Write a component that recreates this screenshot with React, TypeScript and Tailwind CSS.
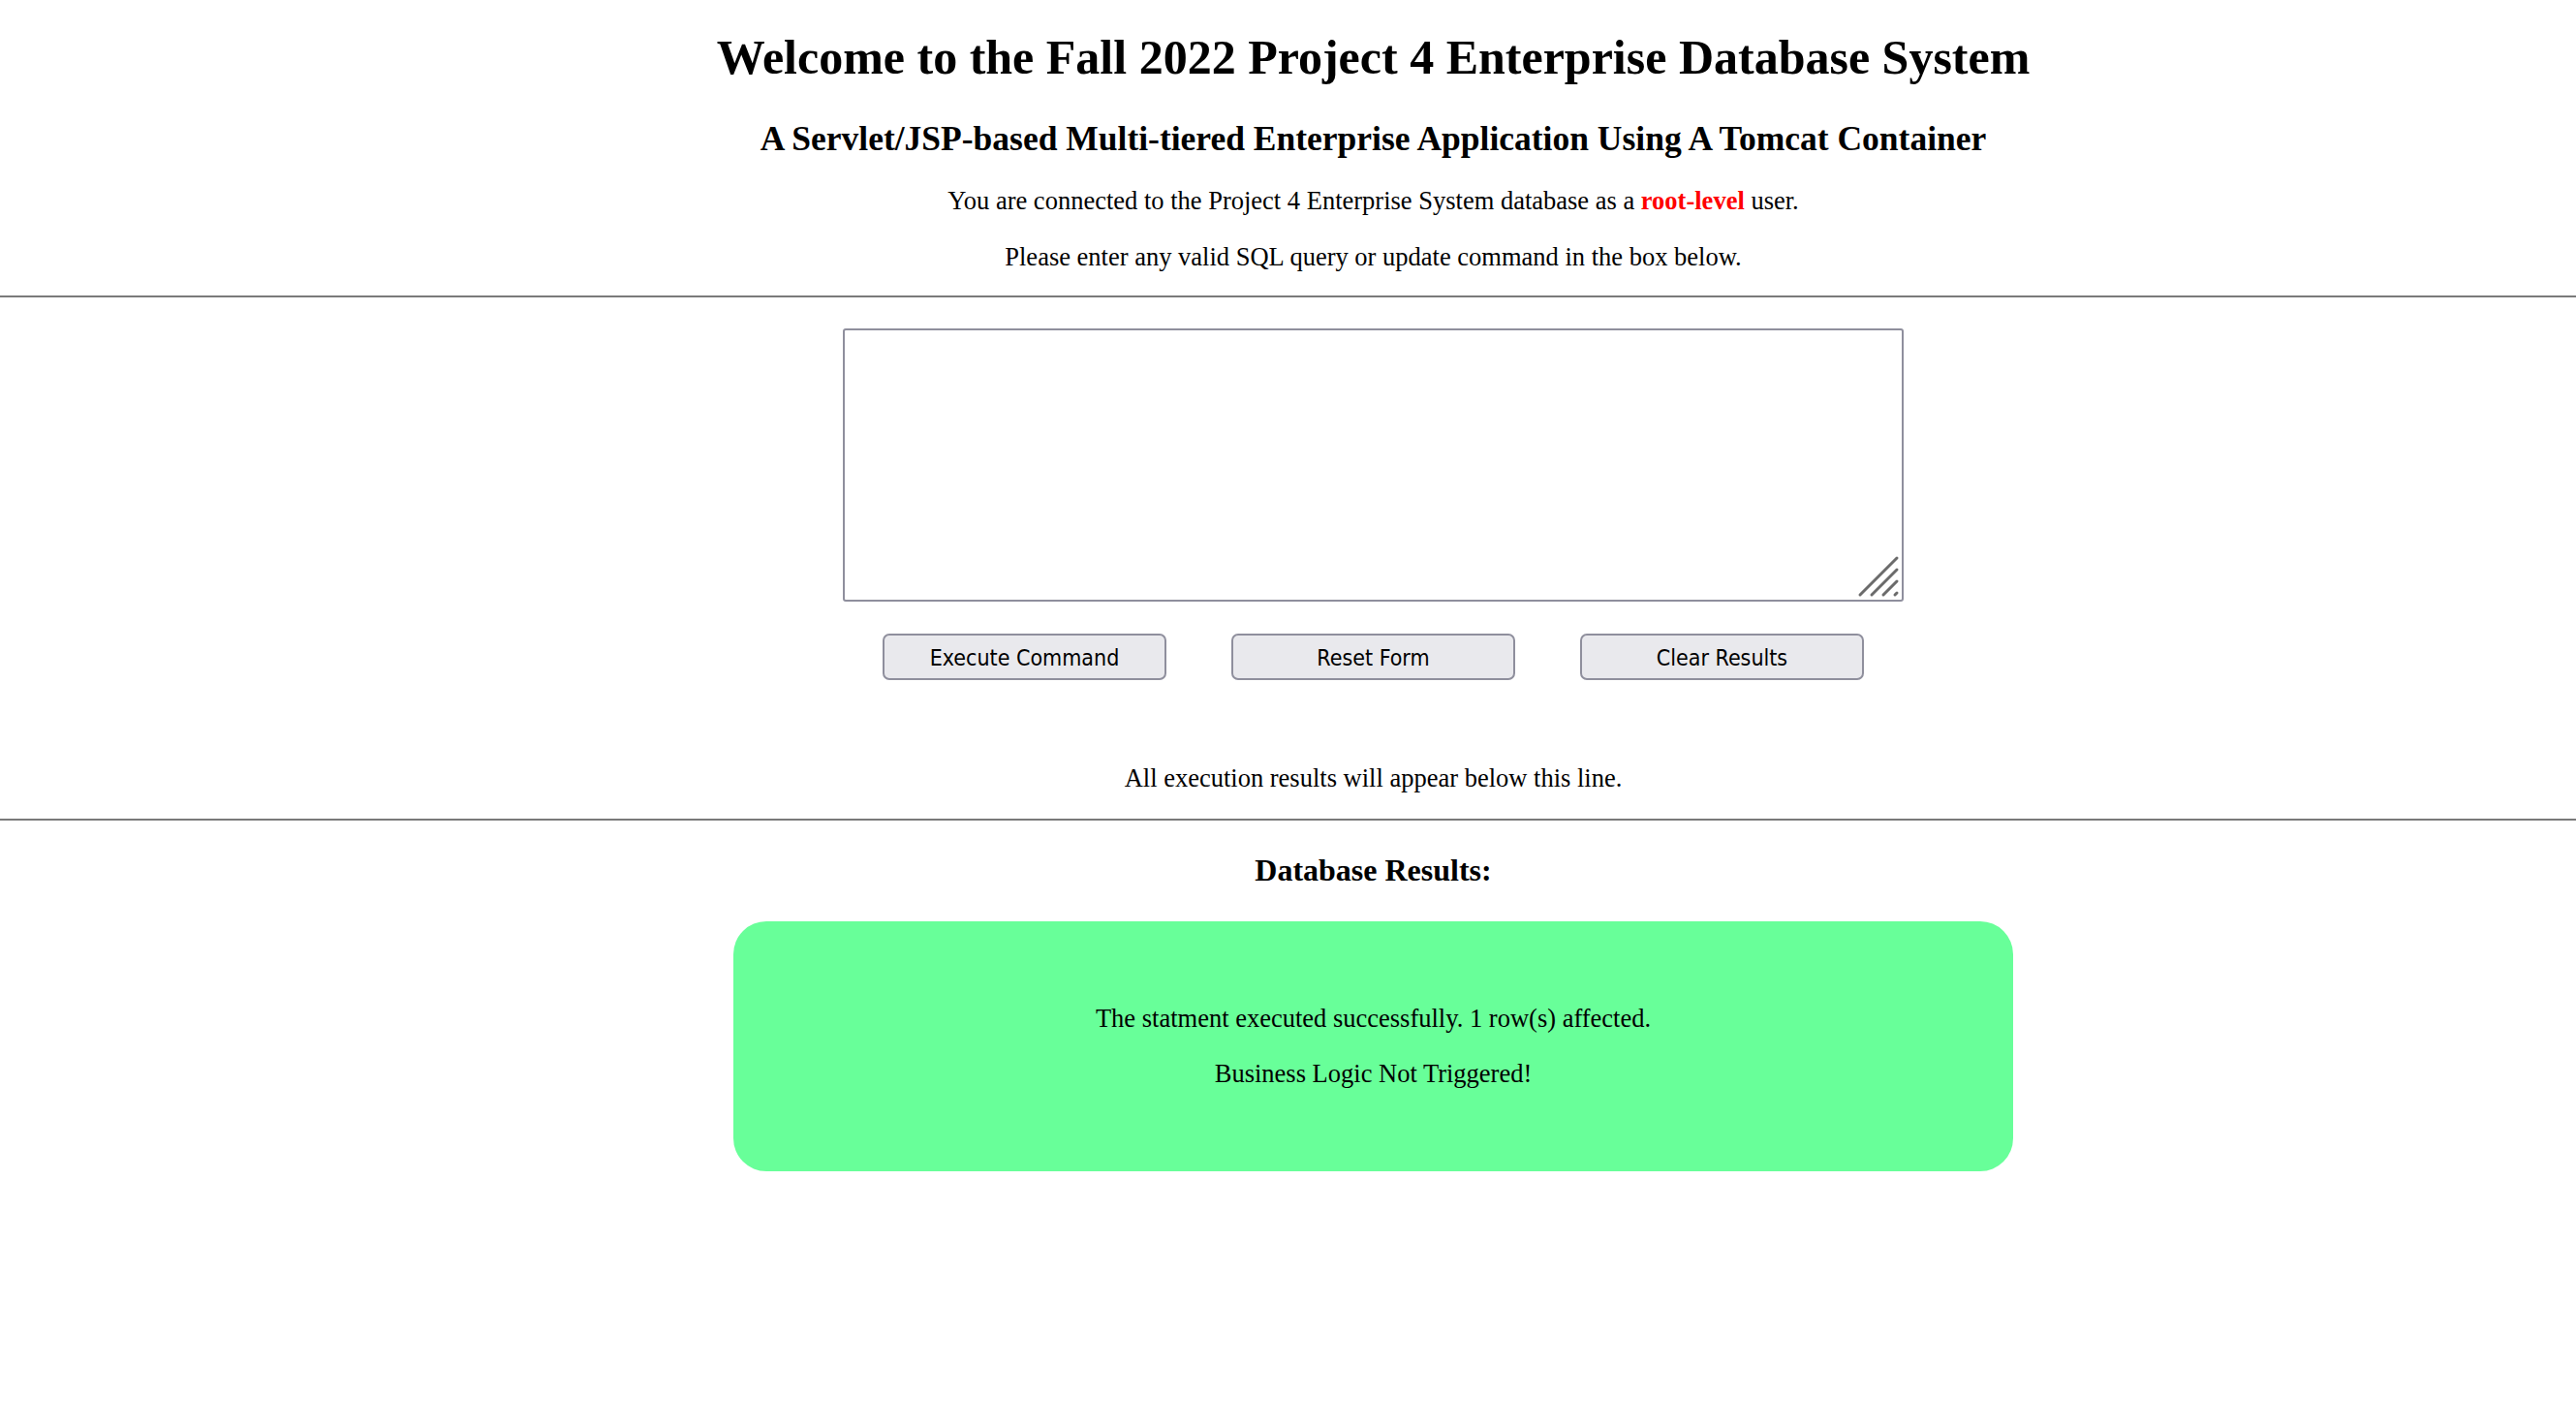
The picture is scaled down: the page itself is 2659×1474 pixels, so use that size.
import React from "react";

const serif = { fontFamily: '"Liberation Serif", "Times New Roman", serif' } as const;

function Grip() {
  return (
    <svg
      className="pointer-events-none absolute right-[4px] bottom-[4px]"
      width="44"
      height="44"
      viewBox="0 0 44 44"
      fill="none"
      stroke="#6b6b6b"
      strokeWidth="3"
      strokeLinecap="round"
    >
      <line x1="3" y1="41" x2="41" y2="3" />
      <line x1="15" y1="41" x2="41" y2="15" />
      <line x1="27" y1="41" x2="41" y2="27" />
      <line x1="39" y1="41" x2="41" y2="39" />
    </svg>
  );
}

function Btn({ label }: { label: string }) {
  return (
    <button
      type="button"
      className="w-[293px] h-[48px] pt-[2px] bg-[#e9e9ed] border-2 border-[#8f8f9d] rounded-[7px] text-[23px] text-black flex items-center justify-center"
      style={{ fontFamily: '"DejaVu Sans Condensed", "DejaVu Sans", sans-serif' }}
    >
      {label}
    </button>
  );
}

export default function App() {
  return (
    <div className="w-full min-h-screen bg-white overflow-hidden">
      <div className="w-[2835px] flex flex-col items-center text-black" style={serif}>
        <h1 className="mt-[29px] text-[50px] leading-[60px] font-bold">
          Welcome to the Fall 2022 Project 4 Enterprise Database System
        </h1>
        <h2 className="mt-[34px] text-[35.5px] leading-[40px] font-bold">
          A Servlet/JSP-based Multi-tiered Enterprise Application Using A Tomcat Container
        </h2>
        <p className="mt-[29px] text-[26.5px] leading-[30px]">
          You are connected to the Project 4 Enterprise System database as a{" "}
          <span className="text-[#ff0000] font-bold">root-level</span> user.
        </p>
        <p className="mt-[28px] text-[26.5px] leading-[30px]">
          Please enter any valid SQL query or update command in the box below.
        </p>
        <div className="mt-[25px] w-full h-[2px] bg-[#7a7a7a]" />
        <div className="relative mt-[32px] w-[1095px] h-[282px]">
          <textarea className="w-full h-full border-2 border-[#8f8f9d] rounded-[3px] bg-white resize-none outline-none" />
          <Grip />
        </div>
        <div className="mt-[33px] flex gap-[67px]">
          <Btn label="Execute Command" />
          <Btn label="Reset Form" />
          <Btn label="Clear Results" />
        </div>
        <p className="mt-[86px] text-[26.5px] leading-[30px]">
          All execution results will appear below this line.
        </p>
        <div className="mt-[27px] w-full h-[2px] bg-[#7a7a7a]" />
        <h3 className="mt-[33px] text-[32px] leading-[36px] font-bold">Database Results:</h3>
        <div className="mt-[35px] w-[1321px] h-[258px] rounded-[34px] bg-[#68ff99] flex flex-col items-center">
          <p className="mt-[85px] text-[26.5px] leading-[30px]">
            The statment executed successfully. 1 row(s) affected.
          </p>
          <p className="mt-[27px] text-[26.5px] leading-[30px]">Business Logic Not Triggered!</p>
        </div>
      </div>
    </div>
  );
}
